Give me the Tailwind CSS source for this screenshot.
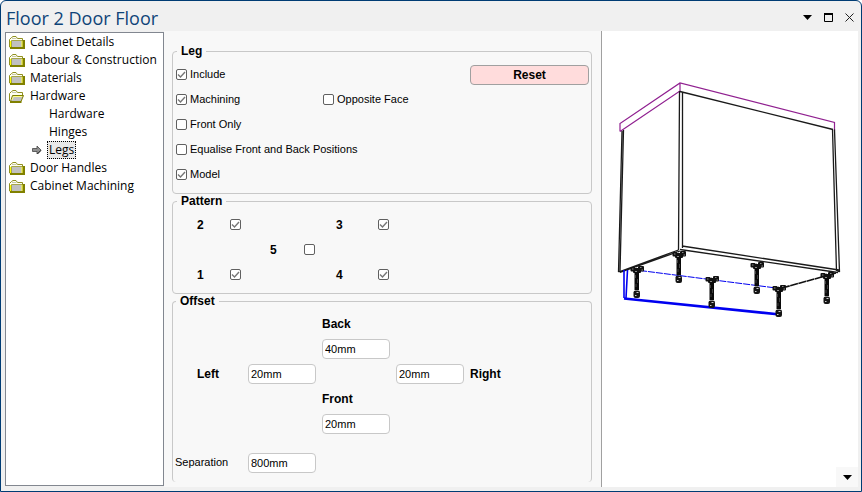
<!DOCTYPE html>
<html lang="en">
<head>
  <meta charset="UTF-8">
  <meta name="viewport" content="width=device-width, initial-scale=1.0">
  <title>Floor 2 Door Floor</title>
  <script src="https://cdn.jsdelivr.net/npm/@tailwindcss/browser@4"></script>
</head>
<body class="bg-white font-['Liberation_Sans',sans-serif] text-[12px] text-black">

<!-- Shared icons -->
<svg class="hidden">
  <symbol id="folder" viewBox="0 0 16 13">
    <path d="M.5 11V3.500L2.500 1.500 4 .5h3L8.500 2.500h5V11z" fill="#fffff0" stroke="#909020"/>
    <path d="M3 2.500h4.500" stroke="#c8c8b0"/>
    <path d="M3 5h10v6H3z" fill="#c0c0c0"/>
    <path d="M2.500 11V4.500H13" fill="none" stroke="#909020" stroke-width=".8"/>
    <path d="M1.500 5v6" stroke="#ffff00"/>
    <path d="M13 5v6" stroke="#ffff40"/>
    <path d="M1 12h14V4" fill="none" stroke="#808000" stroke-width="2"/>
  </symbol>
  <symbol id="folder-open" viewBox="0 0 16 13">
    <path d="M.5 11V3.500L2.500 1.500 4 .5h3L8.500 2.500h5V5" fill="#fffff0" stroke="#909020"/>
    <path d="M3 2.500h4.500" stroke="#c8c8b0"/>
    <path d="M3.500 5.500h11L12 11.500H1.500z" fill="#c0c0c0" stroke="#808000"/>
    <path d="M3 10l1.500-3.500H13" fill="none" stroke="#ffff80"/>
    <path d="M1 12h11.500" stroke="#808000" stroke-width="2"/>
  </symbol>
  <symbol id="tick" viewBox="0 0 11 11">
    <path d="M2 5.500l2.500 2.500L9 3" fill="none" stroke="#777" stroke-width="1.400"/>
  </symbol>
  <symbol id="leg" viewBox="-8 -5 16 34" overflow="visible">
    <rect x="-6.500" y="-3" width="5" height="4.500" rx="1" fill="#111"/>
    <rect x="1" y="-4" width="6" height="5.500" rx="1" fill="#111"/>
    <rect x="-4" y="-2" width="8" height="5" rx="1" fill="#111"/>
    <path d="M-5-1h1.500M-2-2.500h2M3-2.500h1.500M-2 1.500h2M4.500 0h1.500" stroke="#aaa" stroke-width=".8"/>
    <rect x="-2.500" y="2" width="4.500" height="18" fill="#0a0a0a"/>
    <path d="M-1.500 5v3M.5 9v4M-1 14v3" stroke="#777" stroke-width=".5"/>
    <rect x="-3.500" y="20.500" width="6.500" height="7.500" rx="2" fill="#151515"/>
    <path d="M-.5 22.500h2M-2 25.500h1.500" stroke="#ccc"/>
  </symbol>
</svg>

<div class="h-screen flex flex-col bg-[#f0f0f0] border border-[#003c74] rounded-t-md pl-1 pr-[3px] pb-1">

  <!-- Title bar -->
  <header class="h-[30px] shrink-0 flex items-center justify-between">
    <h1 class="pl-px pt-1 font-['Open_Sans',sans-serif] text-[18px] leading-6 text-[#0f4478]">Floor 2 Door Floor</h1>
    <div class="flex items-center gap-3 pr-1 pt-[3px]">
      <button aria-label="Menu" class="w-[9px]"><svg class="block w-[9px] h-[5px]" viewBox="0 0 9 5"><path d="M0 0h9L4.500 5z"/></svg></button>
      <button aria-label="Maximize" class="w-[9px]"><svg class="block size-[9px]" viewBox="0 0 9 9"><path d="M.5 1v7.500h8V1M0 1h9" fill="none" stroke="#000"/><path d="M0 0h9v2H0z"/></svg></button>
      <button aria-label="Close" class="w-[9px]"><svg class="block size-[9px]" viewBox="0 0 9 9"><path d="M.5.5l8 8M8.500.5l-8 8" stroke="#222"/></svg></button>
    </div>
  </header>

  <div class="flex-1 min-h-0 flex">

    <!-- Tree -->
    <nav class="w-[159px] mt-px mb-px shrink-0 bg-white border border-[#828790] font-['Open_Sans',sans-serif] text-[12px] leading-[18px]">
      <ul class="pl-[3px]">
        <li><a href="#" class="flex items-center gap-[5px]"><svg class="w-4 h-[13px]"><use href="#folder"/></svg>Cabinet Details</a></li>
        <li><a href="#" class="flex items-center gap-[5px] whitespace-nowrap"><svg class="w-4 h-[13px] shrink-0"><use href="#folder"/></svg>Labour &amp; Construction</a></li>
        <li><a href="#" class="flex items-center gap-[5px]"><svg class="w-4 h-[13px]"><use href="#folder"/></svg>Materials</a></li>
        <li>
          <a href="#" class="flex items-center gap-[5px]"><svg class="w-4 h-[13px]"><use href="#folder-open"/></svg>Hardware</a>
          <ul class="pl-[23px]">
            <li><a href="#" class="block pl-[17px]">Hardware</a></li>
            <li><a href="#" class="block pl-[17px]">Hinges</a></li>
            <li><a href="#" class="flex items-center gap-[5px]" aria-current="page">
              <svg class="w-2.5 h-2.5" viewBox="0 0 10 10"><path d="M.5 3.500H5V1l4 4-4 4V6.500H.5z" fill="#909090" stroke="#444" stroke-width=".8"/><path d="M5.500 9L9 5.500" stroke="#222"/></svg>
              <span class="bg-[#e8e8e8] border border-dotted border-black px-px leading-4">Legs</span></a></li>
          </ul>
        </li>
        <li><a href="#" class="flex items-center gap-[5px]"><svg class="w-4 h-[13px]"><use href="#folder"/></svg>Door Handles</a></li>
        <li><a href="#" class="flex items-center gap-[5px]"><svg class="w-4 h-[13px]"><use href="#folder"/></svg>Cabinet Machining</a></li>
      </ul>
    </nav>

    <!-- Leg settings -->
    <form class="w-[438px] shrink-0 bg-[#f8f8f8] border-r border-[#a0a0a0] pl-2 pr-[9px] pt-[13px] text-[11px]">

      <fieldset class="border border-[#c8c8c8] rounded-[4px] h-[150px] pl-[3px] pr-[2px]">
        <legend class="ml-px px-1 text-[12px] leading-[14px] font-bold">Leg</legend>
        <div class="pt-1 grid grid-cols-[147px_147px_1fr] auto-rows-[25px] items-center">
          <label class="flex items-center gap-[3px]"><span class="grid"><input type="checkbox" checked class="peer col-start-1 row-start-1 appearance-none size-[11px] bg-white border border-[#606060] rounded-[2px]"><svg class="col-start-1 row-start-1 size-[11px] invisible peer-checked:visible pointer-events-none"><use href="#tick"/></svg></span>Include</label>
          <button type="button" class="col-start-3 h-5 w-[119px] justify-self-end bg-[#ffdcdc] border border-[#a0a0a0] rounded-[4px] text-[12px] leading-[14px] font-bold">Reset</button>
          <label class="col-start-1 flex items-center gap-[3px]"><span class="grid"><input type="checkbox" checked class="peer col-start-1 row-start-1 appearance-none size-[11px] bg-white border border-[#606060] rounded-[2px]"><svg class="col-start-1 row-start-1 size-[11px] invisible peer-checked:visible pointer-events-none"><use href="#tick"/></svg></span>Machining</label>
          <label class="flex items-center gap-[3px]"><input type="checkbox" class="appearance-none size-[11px] bg-white border border-[#606060] rounded-[2px]">Opposite Face</label>
          <label class="col-start-1 flex items-center gap-[3px]"><input type="checkbox" class="appearance-none size-[11px] bg-white border border-[#606060] rounded-[2px]">Front Only</label>
          <label class="col-start-1 col-span-2 flex items-center gap-[3px]"><input type="checkbox" class="appearance-none size-[11px] bg-white border border-[#606060] rounded-[2px]">Equalise Front and Back Positions</label>
          <label class="col-start-1 flex items-center gap-[3px]"><span class="grid"><input type="checkbox" checked class="peer col-start-1 row-start-1 appearance-none size-[11px] bg-white border border-[#606060] rounded-[2px]"><svg class="col-start-1 row-start-1 size-[11px] invisible peer-checked:visible pointer-events-none"><use href="#tick"/></svg></span>Model</label>
        </div>
      </fieldset>

      <fieldset class="border border-[#c8c8c8] rounded-[4px] h-[100px] pl-[3px]">
        <legend class="ml-px px-1 text-[12px] leading-[14px] font-bold">Pattern</legend>
        <div class="pt-1 pl-[21px] grid grid-cols-[33px_40px_34px_32px_42px_11px] auto-rows-[25px] items-center text-[12px] font-bold">
          <label for="leg2">2</label>
          <span class="grid"><input id="leg2" type="checkbox" checked class="peer col-start-1 row-start-1 appearance-none size-[11px] bg-white border border-[#606060] rounded-[2px]"><svg class="col-start-1 row-start-1 size-[11px] invisible peer-checked:visible pointer-events-none"><use href="#tick"/></svg></span>
          <label for="leg3" class="col-start-5">3</label>
          <span class="grid"><input id="leg3" type="checkbox" checked class="peer col-start-1 row-start-1 appearance-none size-[11px] bg-white border border-[#606060] rounded-[2px]"><svg class="col-start-1 row-start-1 size-[11px] invisible peer-checked:visible pointer-events-none"><use href="#tick"/></svg></span>
          <label for="leg5" class="col-start-3">5</label>
          <input id="leg5" type="checkbox" class="appearance-none size-[11px] bg-white border border-[#606060] rounded-[2px]">
          <label for="leg1" class="col-start-1">1</label>
          <span class="grid"><input id="leg1" type="checkbox" checked class="peer col-start-1 row-start-1 appearance-none size-[11px] bg-white border border-[#606060] rounded-[2px]"><svg class="col-start-1 row-start-1 size-[11px] invisible peer-checked:visible pointer-events-none"><use href="#tick"/></svg></span>
          <label for="leg4" class="col-start-5">4</label>
          <span class="grid"><input id="leg4" type="checkbox" checked class="peer col-start-1 row-start-1 appearance-none size-[11px] bg-white border border-[#606060] rounded-[2px]"><svg class="col-start-1 row-start-1 size-[11px] invisible peer-checked:visible pointer-events-none"><use href="#tick"/></svg></span>
        </div>
      </fieldset>

      <fieldset class="border border-b-0 border-[#c8c8c8] rounded-[4px] h-[188px] pl-px">
        <legend class="ml-[2px] px-1 text-[12px] leading-[14px] font-bold">Offset</legend>
        <div class="pt-[3px] grid grid-cols-[68px_68px_68px_68px_68px] auto-rows-[25px] gap-x-[6px] items-center">
          <label for="back" class="col-start-3 text-[12px] font-bold">Back</label>
          <input id="back" value="40mm" class="col-start-3 w-full h-5 px-[2px] bg-white border border-[#c8c8c8] rounded-[4px]">
          <label for="left" class="col-start-1 pl-[23px] text-[12px] font-bold">Left</label>
          <input id="left" value="20mm" class="col-start-2 w-full h-5 px-[2px] bg-white border border-[#c8c8c8] rounded-[4px]">
          <input id="right" value="20mm" class="col-start-4 w-full h-5 px-[2px] bg-white border border-[#c8c8c8] rounded-[4px]">
          <label for="right" class="text-[12px] font-bold">Right</label>
          <label for="front" class="col-start-3 text-[12px] font-bold">Front</label>
          <input id="front" value="20mm" class="col-start-3 w-full h-5 px-[2px] bg-white border border-[#c8c8c8] rounded-[4px]">
          <label for="separation" class="col-start-1 mt-7 pl-px">Separation</label>
          <input id="separation" value="800mm" class="col-start-2 mt-7 w-full h-5 px-[2px] bg-white border border-[#c8c8c8] rounded-[4px]">
        </div>
      </fieldset>
    </form>

    <!-- 3D preview -->
    <section class="relative flex-1 min-w-0 bg-white">
      <svg class="block w-full h-full" viewBox="602 31 256 456" fill="none">
        <!-- worktop -->
        <path d="M620 131.500v-8L680 83l154.500 39.500v8M680 83v8l-60 40.500" stroke="#902090" stroke-width="1.200"/>
        <!-- carcass -->
        <g stroke="#1a1a1a" stroke-width="1.300">
          <path d="M680 91.500l153 38M679.500 91L678.500 250M682.500 92v156"/>
          <path d="M622 131l-3.500 141M623.500 130L620 272"/>
          <path d="M832.500 129.500L836.500 271M834.500 129.500l5 142.500"/>
          <path d="M682 246l157 24M680 249.500l158 23M839.500 272l-3-2"/>
          <path d="M618.500 272l60-22M620 272.500l60-21.500"/>
        </g>
        <!-- plinth -->
        <g stroke="#0000f0">
          <path d="M624 298v-28M627.500 270l-1.500 28" stroke-width="1.600"/>
          <path d="M624 298.500l156 16" stroke-width="2.600"/>
          <path d="M640 270.500l140 18" stroke-dasharray="7 1"/>
        </g>
        <path d="M782 288l54-15" stroke="#111" stroke-width="1.600" stroke-dasharray="8 .5"/>
        <use href="#leg" x="629" y="265" width="16" height="34"/>
        <use href="#leg" x="671" y="250" width="16" height="34"/>
        <use href="#leg" x="704" y="275" width="16" height="34"/>
        <use href="#leg" x="749" y="261" width="16" height="34"/>
        <use href="#leg" x="771" y="284" width="16" height="34"/>
        <use href="#leg" x="819" y="271" width="16" height="34"/>
      </svg>
      <button aria-label="View options" class="absolute right-0 bottom-0 w-[22px] h-5 bg-[#f8f8f8] flex items-center justify-center"><svg class="w-[9px] h-[5px]" viewBox="0 0 9 5"><path d="M0 0h9L4.500 5z"/></svg></button>
    </section>
  </div>
</div>
</body>
</html>
